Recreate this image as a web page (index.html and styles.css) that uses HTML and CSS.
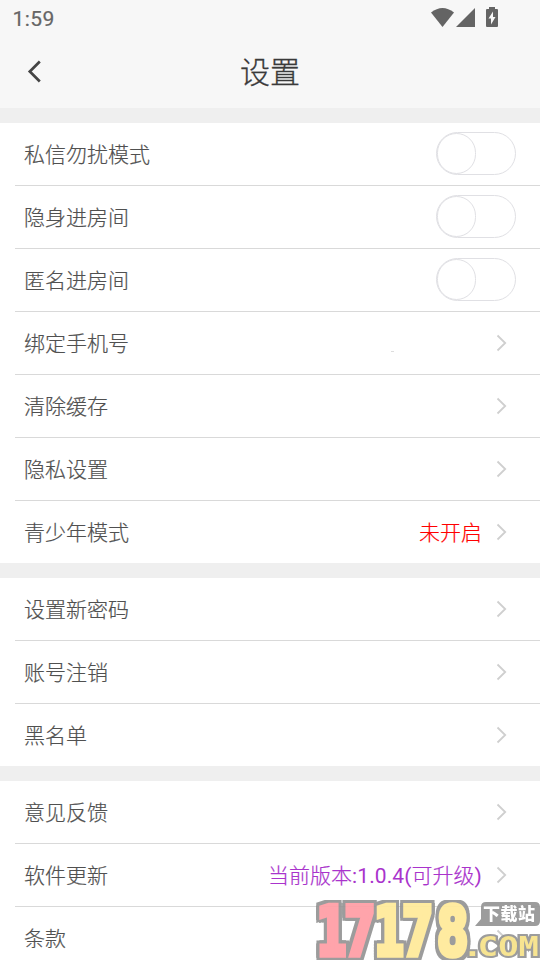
FILE: index.html
```html
<!DOCTYPE html>
<html lang="zh-CN">
<head>
<meta charset="utf-8">
<title>设置</title>
<link rel="stylesheet" href="styles.css">
</head>
<body>
<svg class="defs" width="0" height="0"><symbol id="chev" viewBox="0 0 12 18"><path d="M1.500 1.500 9.200 9 1.500 16.500" fill="none" stroke="#cfcfcf" stroke-width="1.800"/></symbol></svg>
<header class="top">
  <div class="status">
    <span class="time">1:59</span>
    <svg class="status-icons" width="70" height="24" viewBox="0 0 70 24" fill="#646464">
      <path d="M1 5.500Q12.500-3.500 24 5.500L12.500 20Z"/>
      <path d="M45 1V20H26Z"/>
      <path fill-rule="evenodd" d="M59 0h6v2h2q1 0 1 1v16q0 1-1 1H57q-1 0-1-1V3q0-1 1-1h2ZM63 4.500 58.500 11.500H61V17.500L65.500 10H63Z"/>
    </svg>
  </div>
  <div class="nav">
    <svg class="back" width="20" height="26" viewBox="0 0 20 26"><path d="M15.800 2.500 5.800 12.500 15.800 22.500" fill="none" stroke="#444" stroke-width="2.700"/></svg>
    <h1>设置</h1>
  </div>
</header>
<main>
  <section class="group">
    <div class="row"><span class="label">私信勿扰模式</span><i class="switch"></i></div>
    <div class="row"><span class="label">隐身进房间</span><i class="switch"></i></div>
    <div class="row"><span class="label">匿名进房间</span><i class="switch"></i></div>
    <div class="row"><span class="label">绑定手机号</span><i class="dash"></i><svg class="chev"><use href="#chev"/></svg></div>
    <div class="row"><span class="label">清除缓存</span><svg class="chev"><use href="#chev"/></svg></div>
    <div class="row"><span class="label">隐私设置</span><svg class="chev"><use href="#chev"/></svg></div>
    <div class="row"><span class="label">青少年模式</span><span class="value red">未开启</span><svg class="chev"><use href="#chev"/></svg></div>
  </section>
  <section class="group">
    <div class="row"><span class="label">设置新密码</span><svg class="chev"><use href="#chev"/></svg></div>
    <div class="row"><span class="label">账号注销</span><svg class="chev"><use href="#chev"/></svg></div>
    <div class="row"><span class="label">黑名单</span><svg class="chev"><use href="#chev"/></svg></div>
  </section>
  <section class="group">
    <div class="row"><span class="label">意见反馈</span><svg class="chev"><use href="#chev"/></svg></div>
    <div class="row"><span class="label">软件更新</span><span class="value purple">当前版本<span class="version">:1.0.4(</span>可升级<span class="version">)</span></span><svg class="chev"><use href="#chev"/></svg></div>
    <div class="row"><span class="label">条款</span><svg class="chev"><use href="#chev"/></svg></div>
  </section>
</main>
<svg class="mark" width="224" height="60" viewBox="0 0 224 60">
  <g class="outlined">
    <text class="digits" transform="translate(0 55) scale(.9 1.370)" x="0 31.500 64 95.500 134.500" y="0"><tspan class="pink">17</tspan><tspan class="yellow">178</tspan></text>
  </g>
  <path d="M159 26 165 19V7Q165 2 170 2H219Q224 2 224 7V21Q224 26 219 26Z" fill="#969696"/>
  <text class="site" x="167" y="20" textLength="52">下载站</text>
  <text class="com" transform="translate(0 56) scale(1.250 1)" x="117 129.500 145.900 162" y="0">.COM</text>
</svg>
</body>
</html>
```
FILE: styles.css
```css
* { box-sizing: border-box; }
body { margin: 0; width: 540px; height: 960px; overflow: hidden; position: relative; background: #efefef; color: #505050; font: 21px/30px Roboto, "Noto Sans CJK SC", sans-serif; }
.defs { position: absolute; }
.top { height: 108px; background: #f7f7f7; }
.status { height: 36px; padding: 7px 40px 0 12.500px; display: flex; justify-content: space-between; }
.time { font-size: 21px; line-height: 24px; letter-spacing: .4px; color: #666; -webkit-text-stroke: .2px #666; }
.nav { height: 72px; display: grid; grid-template-columns: 60px 1fr 60px; align-items: center; }
.back { margin-left: 24px; }
h1 { margin: 0; padding-top: 1px; text-align: center; font-size: 30px; line-height: 44px; font-weight: 300; color: #3a3a3a; -webkit-text-stroke: .3px; }
.group { margin-top: 15px; background: #fff; }
.row { height: 63px; margin-left: 15px; padding: 0 24px 0 9px; border-bottom: 1px solid #d9d9d9; display: flex; align-items: center; }
.row:last-child { height: 62px; border: 0; }
.label, .value { padding-top: 2px; font-weight: 300; -webkit-text-stroke: .2px; }
.version { font-weight: 400; letter-spacing: .1px; -webkit-text-stroke: 0; }
.switch { margin: 0 0 2px auto; width: 80px; height: 43px; border: 1px solid #e0e0e4; border-radius: 22px; }
.switch::before { content: ""; box-sizing: border-box; display: block; width: 39px; height: 41px; border: 1px solid #e0e0e4; border-radius: 20px; }
.chev { margin: 0 8px 1px auto; width: 12px; height: 18px; }
.value { margin-left: auto; }
.value + .chev { margin-left: 14px; }
.dash { width: 3px; height: 1px; margin: 17px 0 0 262px; background: #ddd; }
.red { color: #f00; }
.purple { color: #a933cc; }
.mark { position: absolute; left: 316px; top: 900px; opacity: .94; }
.outlined { filter: drop-shadow(3px 0 0 #969696) drop-shadow(-3px 0 0 #969696) drop-shadow(0 3px 0 #969696) drop-shadow(0 -3px 0 #969696); }
.digits { font: 700 50px "DejaVu Sans", sans-serif; stroke-width: 4px; stroke-linejoin: miter; }
.pink { fill: #ff9fa6; stroke: #ff9fa6; }
.yellow { fill: #ffea9b; stroke: #ffea9b; }
.site { font: 900 17px "Noto Sans CJK SC", sans-serif; fill: #fff; }
.com { font: 700 27px "DejaVu Sans Mono", monospace; fill: #f7e38b; stroke: #969696; stroke-width: 4px; paint-order: stroke; stroke-linejoin: miter; }
```
